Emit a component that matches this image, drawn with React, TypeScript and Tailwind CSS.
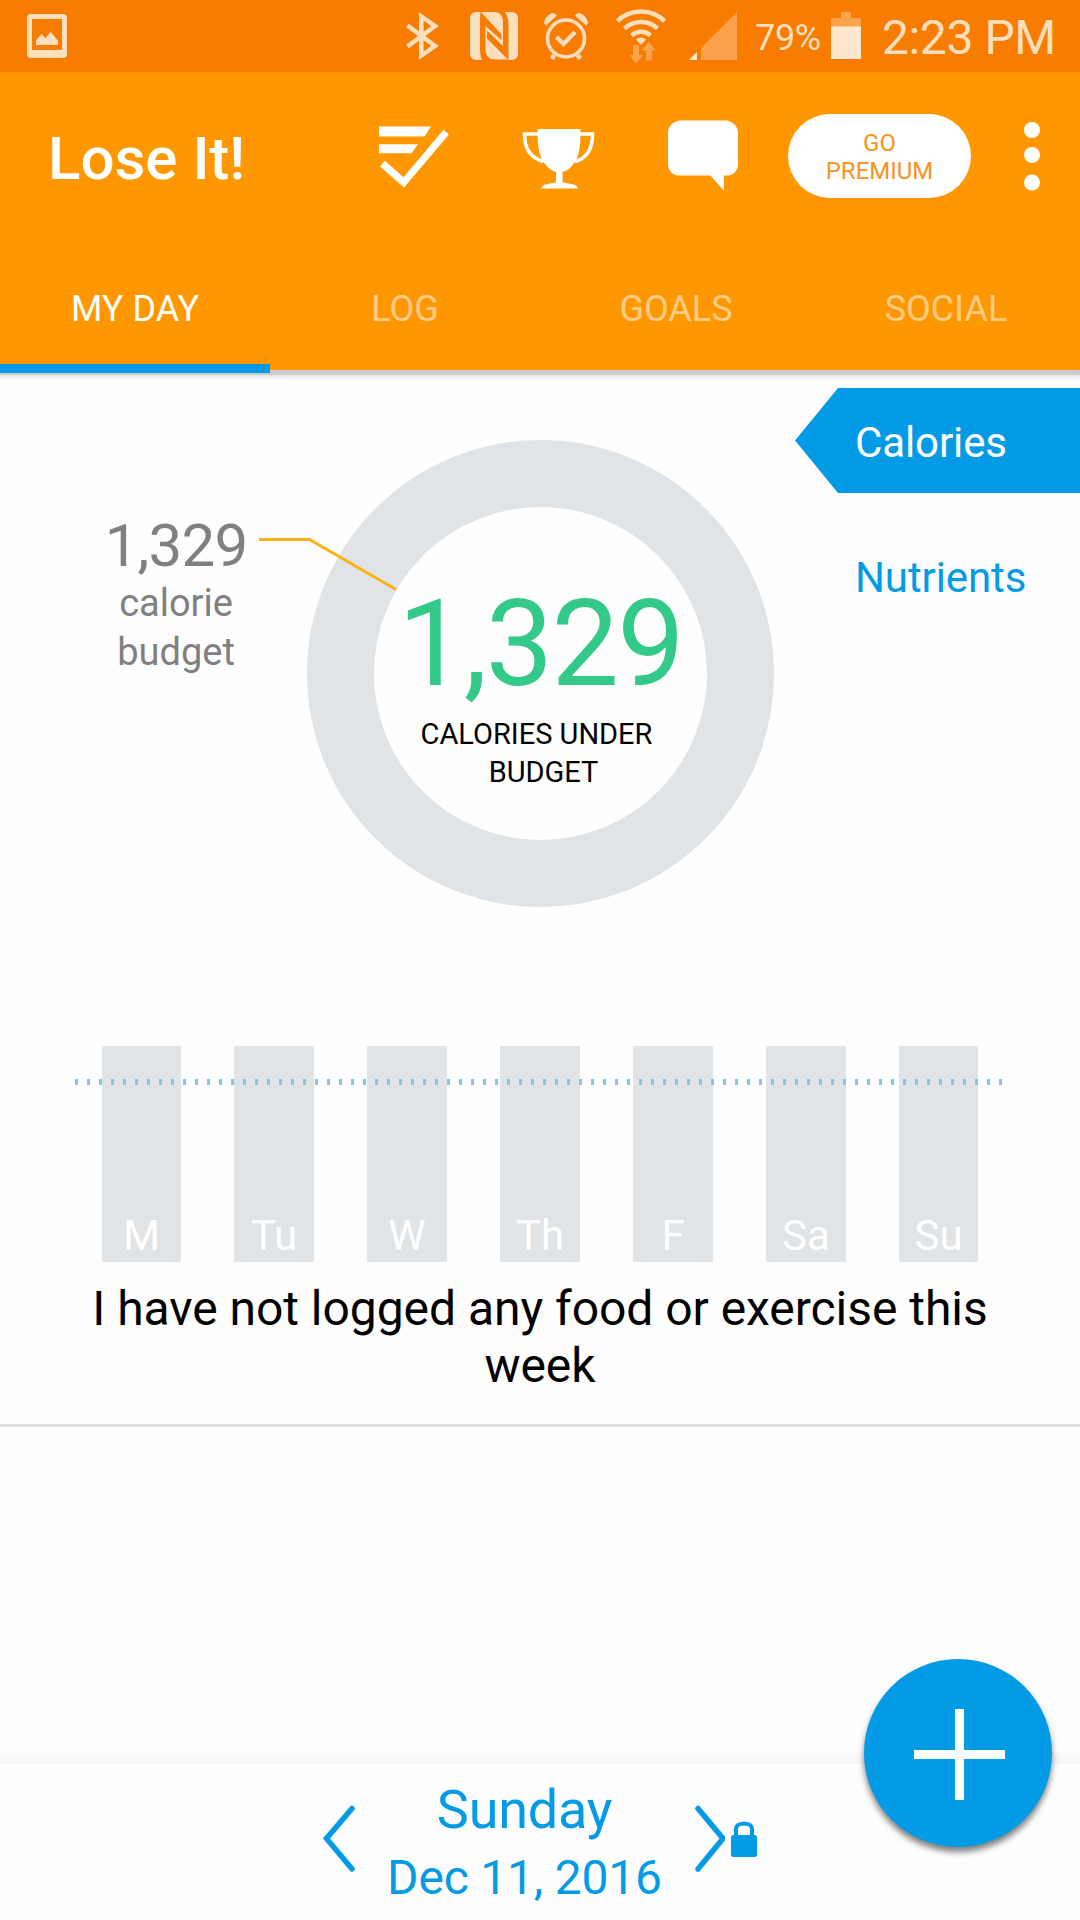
import clsx from 'clsx';

const TABS = ['MY DAY', 'LOG', 'GOALS', 'SOCIAL'];
const DAYS = ['M', 'Tu', 'W', 'Th', 'F', 'Sa', 'Su'];

const StatusBar = () => (
  <div className="flex h-[72px] items-center bg-[#f77c00] text-[#fddebd]">
    <svg className="ml-[27px] h-11 w-10" viewBox="0 0 40 44" fill="currentColor">
      <path fillRule="evenodd" d="M4 0h32a4 4 0 0 1 4 4v36a4 4 0 0 1-4 4H4a4 4 0 0 1-4-4V4a4 4 0 0 1 4-4Zm1 5v31h30V5H5Z" />
      <path d="M9 31v-5l5.500-6 4 4 5-6 7.500 8.500V31Z" />
    </svg>
    <svg className="ml-[339px] h-12 w-[33px]" viewBox="0 0 33 48" fill="none" stroke="currentColor" strokeWidth="4.500">
      <path d="M1.500 13.500 29 34 15.300 43.500v-39L29 14 1.500 34.500" />
    </svg>
    <svg className="ml-[31px] h-12 w-12" viewBox="0 0 48 48" fill="currentColor">
      <path d="M6 0h4.500C10 4 10 8 10 14v20c0 6 .2 10 2 14H6a6 6 0 0 1-6-6V6a6 6 0 0 1 6-6Z" />
      <path d="M11 0h13c6 0 9 4 9 10v24L17 18.500v8L38 47.500H25c-6 0-9.500-4-9.500-10V14L31.500 28v-5.500Z" />
      <path d="M35 0h7a6 6 0 0 1 6 6v36a6 6 0 0 1-6 6h-3.500V14c0-6-1-10-3.500-14Z" />
    </svg>
    <svg className="ml-[26px] h-12 w-11" viewBox="0 0 44 48" fill="none" stroke="currentColor">
      <circle cx="22" cy="26.500" r="18.500" strokeWidth="3.600" />
      <path d="m12.500 25 7 7L31 20" strokeWidth="4.200" />
      <path d="m10 43-2 4M34 43l2 4" strokeWidth="4.500" />
      <path d="M0 11C1 5 5 1.500 10 1l3 2.500L2 13.500ZM44 11c-1-6-5-9.500-10-10l-3 2.500 11 10Z" fill="currentColor" stroke="none" />
    </svg>
    <svg className="ml-7 h-[54px] w-[50px]" viewBox="0 0 50 54" fill="none" stroke="currentColor" strokeWidth="4.500">
      <path d="M1.500 12a34 34 0 0 1 47 0M8.500 19.500a24 24 0 0 1 33 0M15.500 26.500a14 14 0 0 1 19 0" />
      <path d="M20 30.500q5-4 10 0L25 36Z" fill="currentColor" stroke="none" />
      <path d="M17 36h6v10h4l-7 9-6.500-9H17ZM33 32.500l6.500 9H36v10h-6v-10h-4Z" fill="#faa34c" stroke="none" />
    </svg>
    <svg className="ml-[23px] h-12 w-12" viewBox="0 0 48 48">
      <path d="M0 48 8 40v8Z" fill="#fee7cc" />
      <path d="M12 36 48 0v48H12Z" fill="#faa34c" />
    </svg>
    <span className="ml-[18px] w-[76px] pt-1 text-[36px] leading-none tracking-[-0.3px]">79%</span>
    <svg className="h-12 w-[30px]" viewBox="0 0 30 48">
      <path d="M10 0h10v6h10v9H0V6h10Z" fill="#faa34c" />
      <path d="M0 14.500h30V47H0Z" fill="#fee7cc" />
    </svg>
    <span className="ml-[21px] pt-1 text-[48px] leading-none tracking-[-0.4px] whitespace-nowrap">2:23 PM</span>
  </div>
);

const AppBar = () => (
  <div className="flex h-[168px] items-center text-white">
    <h1 className="w-[368px] pt-1.5 pl-12 text-[60px] leading-none font-medium">Lose It!</h1>
    <svg className="size-24" viewBox="0 0 96 96" fill="currentColor">
      <path d="M11 18.500h52l-6.500 10H11ZM11 36.300h39l-6.500 9H11Z" />
      <path d="m12 58.500 5-5.700 18.500 16.500 40-47.500 5.500 4.700L36 79.500Z" />
    </svg>
    <svg className="ml-12 size-24" viewBox="0 0 96 96" fill="currentColor">
      <path d="M25.500 21h43c0 18-1 27-7 35-3 4-7 7-11 8v10c3 2 15 1 15.500 6.500h-37C30 75 41 76 44 74V64c-4-1-8-4-11-8-6-8-7.500-17-7.500-35Z" />
      <path d="M28 26H12.500C12.500 40 18 50 31.500 53.500M67 26h13.500C80.500 40 76 50 63 53.500" fill="none" stroke="currentColor" strokeWidth="3.600" />
    </svg>
    <svg className="ml-12 size-24" viewBox="0 0 96 96" fill="currentColor">
      <path d="M23 12.500h48c6 1.500 11 6 11 12V57c0 5-5 10.500-10 10.500h-4V83L54.500 67.500H22c-5 0-10-5.500-10-10.500V24.500c0-6 5-10.500 11-12Z" />
    </svg>
    <button className="ml-9 h-[84px] w-[183px] rounded-full bg-white pt-[2px] text-center text-[24px] leading-7 text-[#f7941e]">
      GO
      <br />
      PREMIUM
    </button>
    <svg className="ml-[53px] h-[70px] w-4" viewBox="0 0 16 70" fill="currentColor">
      <circle cx="8" cy="9" r="8" />
      <circle cx="8" cy="34" r="8" />
      <circle cx="8" cy="61.500" r="8" />
    </svg>
  </div>
);

const Tabs = () => (
  <nav className="flex h-[130px]">
    {TABS.map((tab, i) => (
      <a
        key={tab}
        className={clsx(
          'relative flex w-1/4 items-center justify-center pt-2 text-[36px]',
          i === 0 ? 'text-white' : 'text-[#ffcc88]',
          i > 1 && 'pl-0.5'
        )}
      >
        {tab}
        {i === 0 && <span className="absolute inset-x-0 -bottom-[3px] z-10 h-[9px] bg-[#049be6]" />}
      </a>
    ))}
  </nav>
);

const Summary = () => (
  <section className="relative flex h-[676px]">
    <div className="w-[307px] pt-[146px] pl-[45px] text-center text-[#808080]">
      <div className="text-[60px] leading-[60px] tracking-[-0.8px]">1,329</div>
      <div className="mt-[3px] text-[38px] leading-[49px]">
        calorie
        <br />
        budget
      </div>
    </div>
    <div className="mt-[70px] flex size-[467px] flex-col items-center rounded-full border-[67px] border-[#e0e4e7] pt-[77px]">
      <div className="text-[120px] leading-[120px] tracking-[-1.7px] text-[#33c989]">1,329</div>
      <div className="mt-[11px] text-center text-[29px] leading-[38px] whitespace-nowrap text-black">
        <div className="pr-2">CALORIES UNDER</div>
        <div className="pl-1.5">BUDGET</div>
      </div>
    </div>
    <div className="ml-[21px] flex flex-1 flex-col gap-[30px] pt-[18px] text-[42px] tracking-[-0.1px]">
      <div className="flex h-[105px] items-center bg-[#049be6] pt-1 pl-[60px] text-white [clip-path:polygon(0_50%,43px_0,100%_0,100%_100%,43px_100%)]">
        Calories
      </div>
      <div className="flex h-[105px] items-center pt-1 pl-[60px] text-[#049be6]">Nutrients</div>
    </div>
    {/* callout from the budget label to the ring */}
    <svg className="absolute top-[160px] left-[259px] h-[65px] w-[140px]" viewBox="0 0 140 65" fill="none">
      <path d="M0 9.500h50.500L137 59.500" stroke="#ffb014" strokeWidth="3" />
    </svg>
  </section>
);

const Week = () => (
  <section className="border-b-[3px] border-[#dcdedf] pb-[30px]">
    <div className="relative flex h-[216px] gap-[53px] px-[102px]">
      {DAYS.map((day) => (
        <div
          key={day}
          className="flex w-20 shrink-0 items-end justify-center bg-[#e0e4e7] text-[42px] leading-[52px] text-white first:w-[79px] nth-[7]:w-[79px]"
        >
          {day}
        </div>
      ))}
      <div className="absolute top-[33px] left-[75px] h-1.5 w-[927px] bg-[repeating-linear-gradient(90deg,#84c6e8_0_3px,transparent_3px_12px)]" />
    </div>
    <p className="mt-[18px] px-20 text-center text-[48px] leading-[57px] tracking-[-0.04px] text-black">
      I have not logged any food or exercise this week
    </p>
  </section>
);

const DateBar = () => (
  <footer className="mt-auto">
    <div className="h-3 bg-linear-to-b from-[#fbfbfb] to-[#f7f7f7]" />
    <div className="flex h-[156px] pl-[323px] text-[#049be6]">
      <svg className="mt-10 h-[70px] w-[35px]" viewBox="0 0 35 70" fill="none" stroke="currentColor" strokeWidth="5.500" strokeLinecap="round">
        <path d="M29 4.500 3.500 34.500 29 65" />
      </svg>
      <div className="w-[333px] pt-[18px] text-center">
        <div className="text-[54px] leading-[56px] tracking-[-0.2px]">Sunday</div>
        <div className="mt-2.5 text-[48px] leading-[60px] tracking-[-0.2px]">Dec 11, 2016</div>
      </div>
      <svg className="mt-10 h-[70px] w-[34px]" viewBox="0 0 34 70" fill="none" stroke="currentColor" strokeWidth="5.500" strokeLinecap="round">
        <path d="M7 4.500 32 34.500 7 65" />
      </svg>
      <svg className="mt-[57px] ml-1.5 h-9 w-[26px]" viewBox="0 0 26 36" fill="currentColor">
        <rect y="14" width="26" height="22" rx="2.500" />
        <path d="M5 16V8q0-5 8-5.500 8 .5 8 5.500v8" fill="none" stroke="currentColor" strokeWidth="4" />
      </svg>
    </div>
  </footer>
);

export default function App() {
  return (
    <div className="relative flex h-[1920px] w-[1080px] flex-col overflow-hidden bg-[#fefefe] font-['Roboto',sans-serif]">
      <header className="relative h-[370px] bg-[#ff9800]">
        <StatusBar />
        <AppBar />
        <Tabs />
        <div className="absolute inset-x-0 top-full h-[5px] bg-[#cccccc]" />
        <div className="absolute inset-x-0 top-[375px] h-[5px] bg-linear-to-b from-[#e2e5e8] to-[#fefefe]" />
      </header>
      <Summary />
      <Week />
      <DateBar />
      <button className="absolute right-7 bottom-[73px] flex size-[188px] items-center justify-center rounded-full bg-[#049be6] text-white shadow-[0_5px_6px_rgba(0,0,0,0.5)]">
        <svg className="mt-[3px] ml-[3px] size-[91px]" viewBox="0 0 91 91" stroke="currentColor" strokeWidth="9">
          <path d="M45.500 0v91M0 45.500h91" />
        </svg>
      </button>
    </div>
  );
}
